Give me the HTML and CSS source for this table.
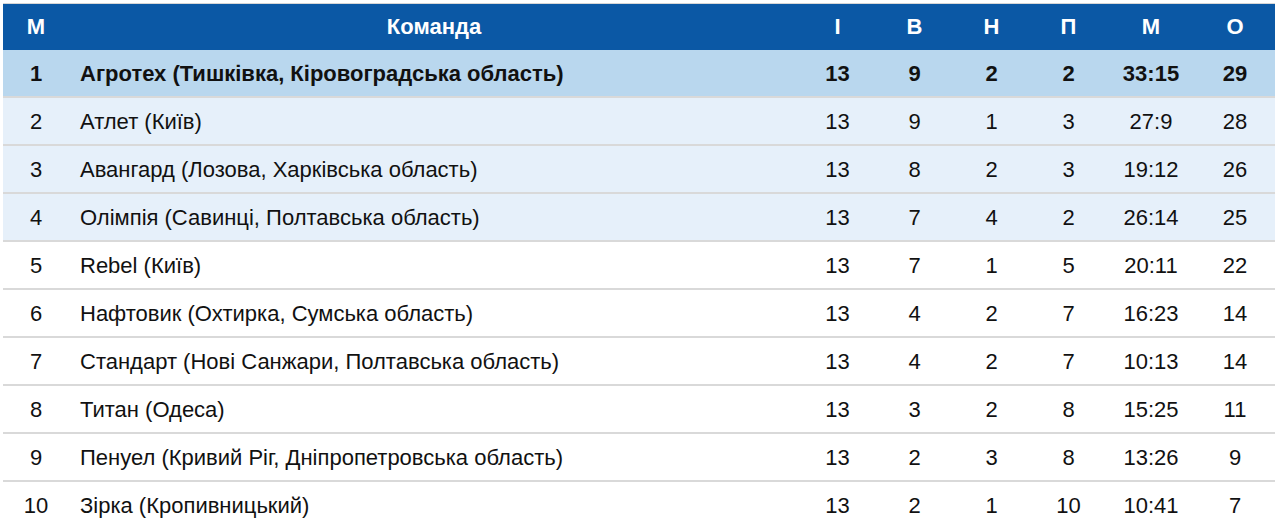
FILE: index.html
```html
<!DOCTYPE html>
<html lang="uk">
<head>
<meta charset="utf-8">
<link rel="stylesheet" href="styles.css">
</head>
<body>
<div class="wrap">
<table class="standings">
<colgroup>
<col class="c-pos"><col class="c-team"><col class="c-n"><col class="c-n"><col class="c-n"><col class="c-n"><col class="c-goals"><col class="c-pts">
</colgroup>
<thead>
<tr><th>М</th><th>Команда</th><th>І</th><th>В</th><th>Н</th><th>П</th><th>М</th><th>О</th></tr>
</thead>
<tbody>
<tr class="leader"><td>1</td><td class="team">Агротех (Тишківка, Кіровоградська область)</td><td>13</td><td>9</td><td>2</td><td>2</td><td>33:15</td><td>29</td></tr>
<tr class="zone"><td>2</td><td class="team">Атлет (Київ)</td><td>13</td><td>9</td><td>1</td><td>3</td><td>27:9</td><td>28</td></tr>
<tr class="zone"><td>3</td><td class="team">Авангард (Лозова, Харківська область)</td><td>13</td><td>8</td><td>2</td><td>3</td><td>19:12</td><td>26</td></tr>
<tr class="zone"><td>4</td><td class="team">Олімпія (Савинці, Полтавська область)</td><td>13</td><td>7</td><td>4</td><td>2</td><td>26:14</td><td>25</td></tr>
<tr><td>5</td><td class="team">Rebel (Київ)</td><td>13</td><td>7</td><td>1</td><td>5</td><td>20:11</td><td>22</td></tr>
<tr><td>6</td><td class="team">Нафтовик (Охтирка, Сумська область)</td><td>13</td><td>4</td><td>2</td><td>7</td><td>16:23</td><td>14</td></tr>
<tr><td>7</td><td class="team">Стандарт (Нові Санжари, Полтавська область)</td><td>13</td><td>4</td><td>2</td><td>7</td><td>10:13</td><td>14</td></tr>
<tr><td>8</td><td class="team">Титан (Одеса)</td><td>13</td><td>3</td><td>2</td><td>8</td><td>15:25</td><td>11</td></tr>
<tr><td>9</td><td class="team">Пенуел (Кривий Ріг, Дніпропетровська область)</td><td>13</td><td>2</td><td>3</td><td>8</td><td>13:26</td><td>9</td></tr>
<tr><td>10</td><td class="team">Зірка (Кропивницький)</td><td>13</td><td>2</td><td>1</td><td>10</td><td>10:41</td><td>7</td></tr>
</tbody>
</table>
</div>
</body>
</html>
```

FILE: styles.css
```css
html, body {
  margin: 0;
  padding: 0;
  background: #ffffff;
}
.wrap {
  padding: 3px 5px 0 3px;
}
.standings {
  width: 1272px;
  border-collapse: collapse;
  table-layout: fixed;
  font-family: "Liberation Sans", Arial, sans-serif;
  font-size: 22px;
  line-height: 25px;
  color: #111111;
  border-top: 1px solid #d6d6d6;
}
.c-pos { width: 66px; }
.c-team { width: 730px; }
.c-n { width: 77px; }
.c-goals { width: 88px; }
.c-pts { width: 80px; }
.standings th {
  background: #0b58a5;
  color: #ffffff;
  font-weight: bold;
  height: 45px;
  padding: 0 0 1px;
  text-align: center;
}
.standings td {
  height: 45px;
  padding: 1px 0 0;
  text-align: center;
  border-bottom: 2px solid #d9d9d9;
}
.standings td.team {
  text-align: left;
  padding-left: 11px;
}
.leader td {
  background: #b9d7ee;
  font-weight: bold;
}
.zone td {
  background: #e6f0fa;
}
```
